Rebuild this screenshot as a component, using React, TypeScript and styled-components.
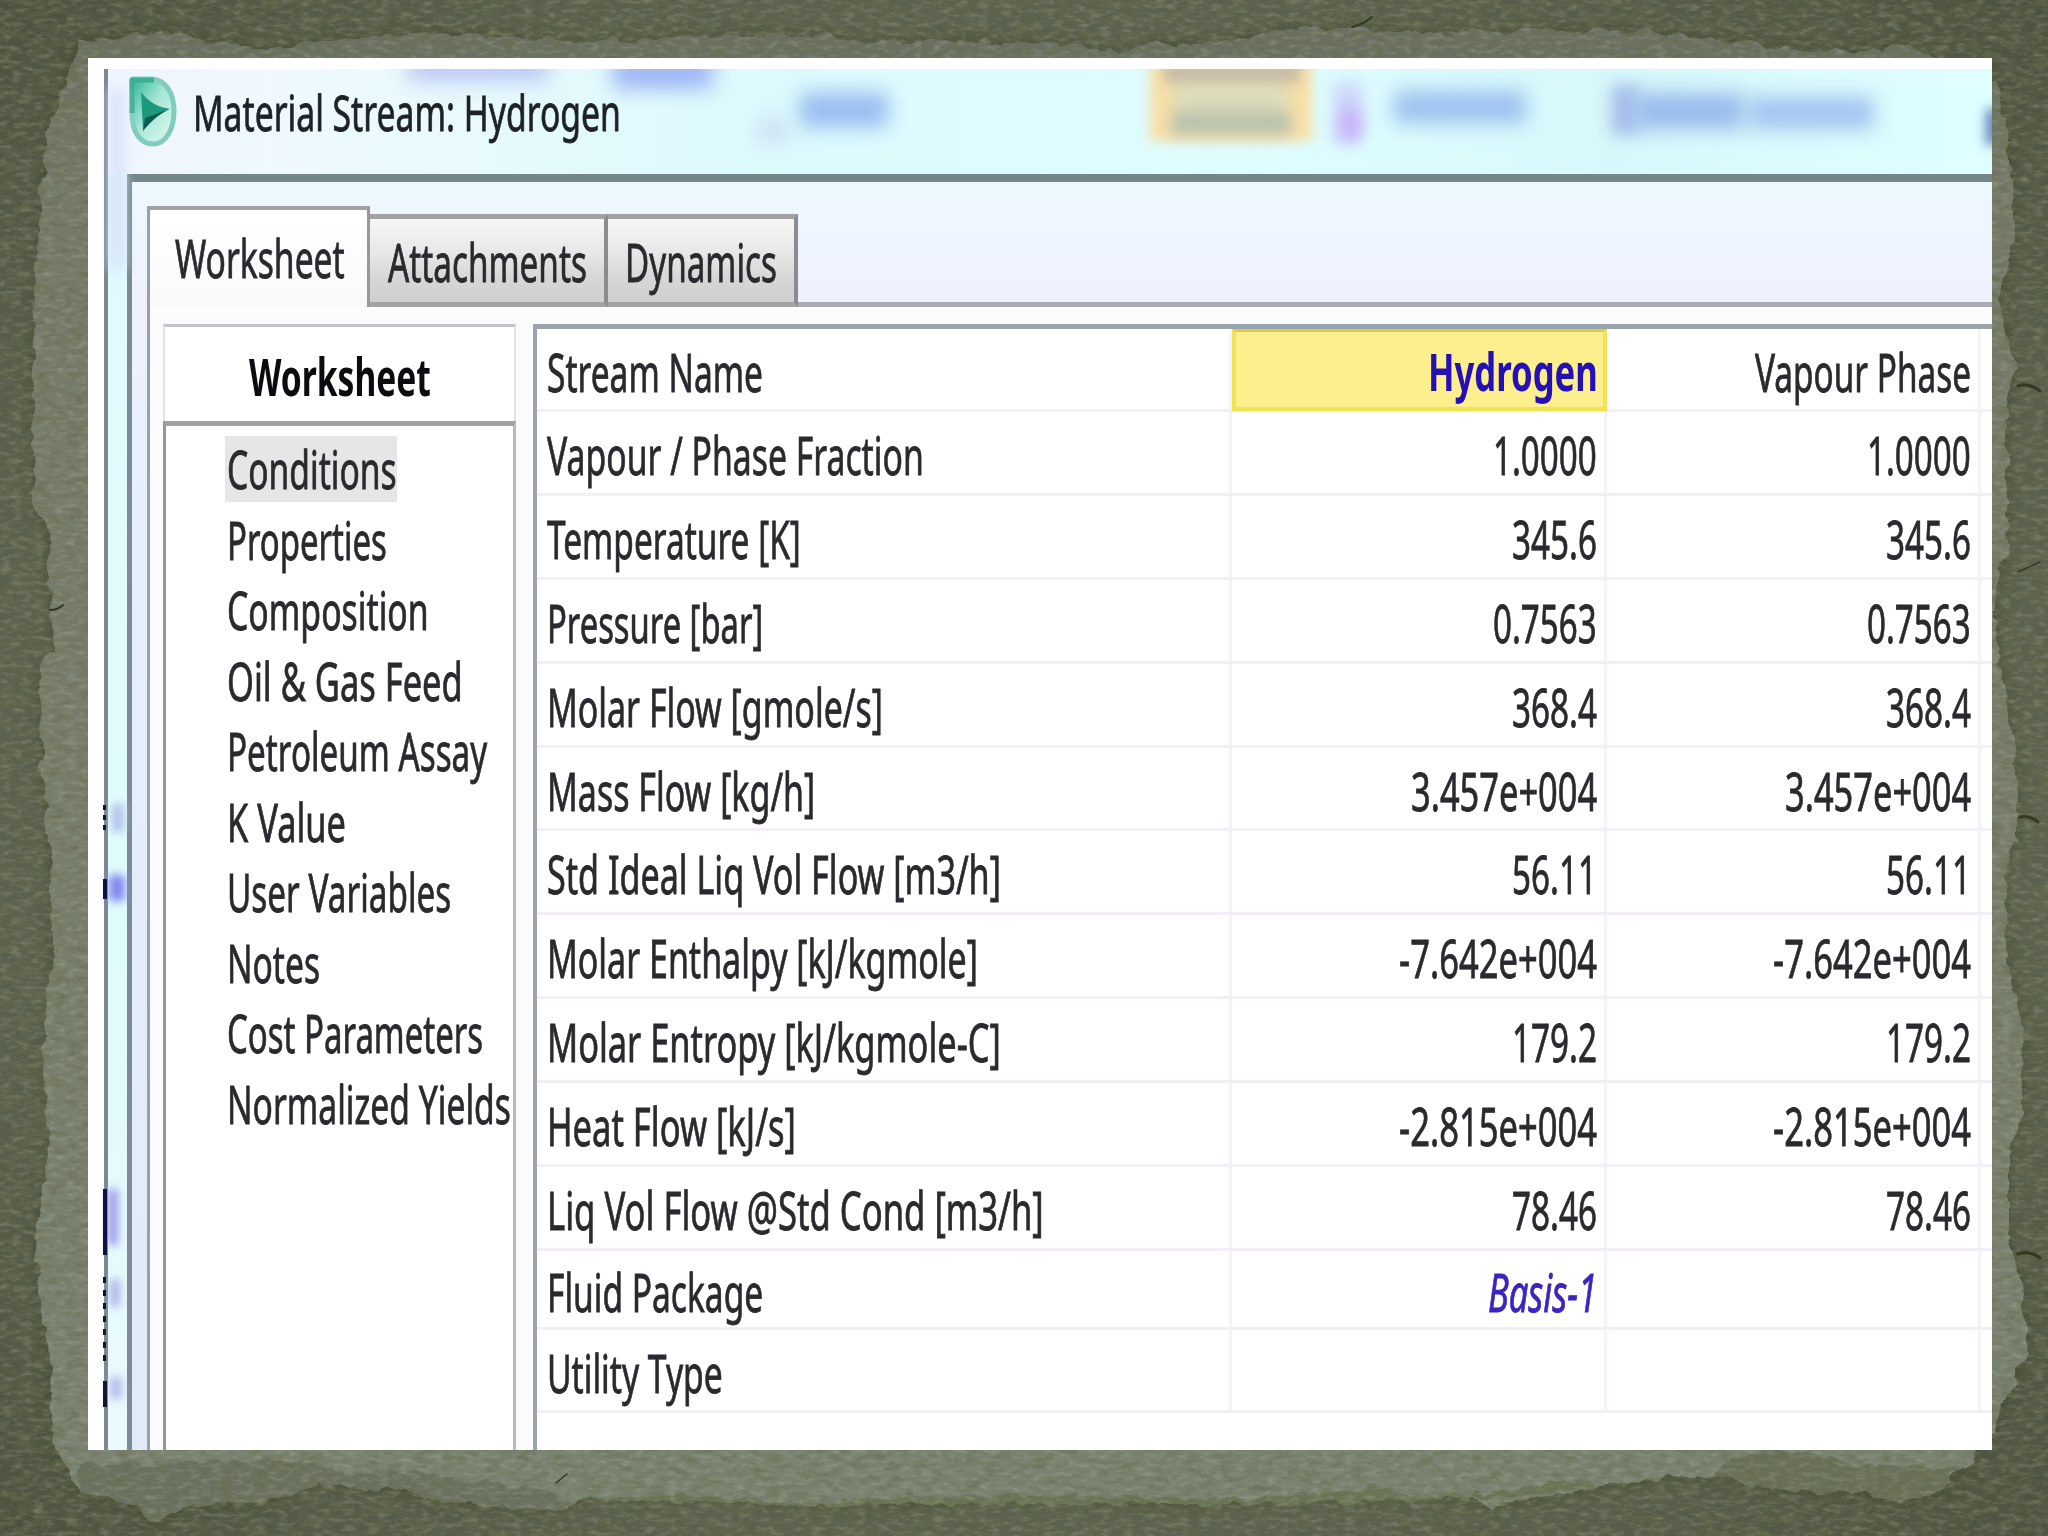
import React, { useLayoutEffect, useRef, useState } from "react";
import styled, { createGlobalStyle, css } from "styled-components";

const Global = createGlobalStyle`
  html, body { margin: 0; padding: 0; }
  body { background: #565d45; overflow: hidden; }
  * { box-sizing: border-box; }
`;

const Slide = styled.main`
  position: relative;
  display: flex;
  width: 2048px;
  height: 1536px;
  padding: 58px 56px 86px 88px;
  overflow: hidden;
  font-family: "Noto Sans", "Open Sans", "DejaVu Sans", sans-serif;
  color: #2a2a2e;
`;

const Backdrop = styled.svg`
  position: absolute;
  inset: 0;
  width: 100%;
  height: 100%;
`;

const Photo = styled.section`
  position: relative;
  flex: 1;
  display: flex;
  min-width: 0;
  padding: 11px 0 0 16px;
  background: #fff;
  overflow: hidden;
`;

const Window = styled.div`
  position: relative;
  flex: 1;
  display: flex;
  flex-direction: column;
  min-width: 0;
  border-left: 4px solid #7d8894;
  background: linear-gradient(180deg, #dcf6fb 0, #e2fcfe 30%, #e0fbfc 62%, #eafafd 100%);
`;

const TitleBar = styled.header`
  position: relative;
  display: flex;
  align-items: center;
  height: 105px;
  padding: 0 0 20px 20px;
  overflow: hidden;
  background: linear-gradient(90deg, #f0f5ff 0, #eef9fd 10%, #dcfafc 35%, #dffdff 60%, #d7f8fa 80%, #dffeff 100%);
`;

const Smudge = styled.i<{ $x: number; $y: number; $w: number; $h: number; $c: string; $b?: number }>`
  position: absolute;
  left: ${(p) => p.$x}px;
  top: ${(p) => p.$y}px;
  width: ${(p) => p.$w}px;
  height: ${(p) => p.$h}px;
  background: ${(p) => p.$c};
  filter: blur(${(p) => p.$b ?? 10}px);
`;

const AppIcon = styled.svg`
  position: relative;
  width: 50px;
  height: 74px;
`;

const Caption = styled.div`
  position: relative;
  margin: 1px 0 0 15px;
  color: #1d2226;
`;

const Client = styled.div`
  flex: 1;
  display: flex;
  flex-direction: column;
  margin-left: 19px;
  padding: 24px 0 0 15px;
  border-top: 8px solid #74868a;
  border-left: 5px solid #7b8c96;
  background: linear-gradient(180deg, #edf8ff 0, #eff1fc 120px, #e6f0fb 300px, #e1eaf7 100%);
`;

const Tabs = styled.nav`
  display: flex;
  align-items: flex-end;
  height: 101px;
`;

const Tab = styled.div<{ $w: number; $active?: boolean }>`
  display: flex;
  justify-content: center;
  align-items: center;
  width: ${(p) => p.$w}px;
  ${(p) =>
    p.$active
      ? css`
          height: 101px;
          padding: 0 0 2px 3px;
          border-top: 4px solid #a0a0a5;
          border-left: 3px solid #98a0a8;
          border-right: 3px solid #98989c;
          background: linear-gradient(180deg, #fff, #f9f8fb);
        `
      : css`
          height: 93px;
          padding-top: 2px;
          border-top: 5px solid #a2a2a5;
          border-right: 4px solid #8c8c90;
          border-bottom: 5px solid #a3a3a5;
          background: linear-gradient(180deg, #f6f6f6 0, #e9e8e9 40%, #d8d7d8 70%, #d0cfd0 100%);
        `}
`;

const TabRail = styled.div`
  flex: 1;
  height: 93px;
  border-bottom: 5px solid #aaa9b0;
`;

const Page = styled.div`
  flex: 1;
  display: flex;
  gap: 17px;
  padding: 17px 0 0 13px;
  border-left: 3px solid #98a0a8;
  background: #fbfafd;
`;

const Sidebar = styled.aside`
  display: flex;
  flex-direction: column;
  width: 353px;
  background: #fff;
`;

const SidebarTitle = styled.h2`
  display: flex;
  justify-content: center;
  align-items: center;
  height: 97px;
  margin: 0;
  padding: 3px 0 0 0;
  border: 2px solid #e3e2e6;
  border-top: 3px solid #c4c4c8;
  border-bottom: 0;
  color: #0c0c10;
`;

const SidebarList = styled.ul`
  flex: 1;
  margin: 0;
  padding: 8px 0 0 59px;
  list-style: none;
  border-top: 5px solid #a2a2a6;
  border-left: 3px solid #96969c;
  border-right: 3px solid #b9b9bd;
`;

const SidebarItem = styled.li`
  display: flex;
  align-items: center;
  height: 70.5px;
`;

const ItemBox = styled.div<{ $selected?: boolean }>`
  display: flex;
  align-items: center;
  height: 66px;
  padding-left: 2px;
  background: ${(p) => (p.$selected ? "#e6e6e7" : "transparent")};
`;

const Table = styled.div`
  flex: 1;
  min-width: 0;
  border-top: 5px solid #9aa4ac;
  border-left: 4px solid #9ca4ae;
  background: #fff;
`;

const Row = styled.div<{ $h: number }>`
  display: grid;
  grid-template-columns: 695px 375px 374px 1fr;
  height: ${(p) => p.$h}px;
  border-bottom: 3px solid #f2f0f4;
`;

const Cell = styled.div<{ $tone?: "name" | "basis" }>`
  display: flex;
  align-items: center;
  justify-content: flex-end;
  padding: 5px 7px 0 0;
  border-right: 3px solid #f5f3f7;
  ${(p) =>
    p.$tone === "name" &&
    css`
      margin-bottom: -2px;
      padding: 3px 5px 0 0;
      border: 4px solid #f2e352;
      border-top: 3px solid #d9cc4c;
      background: #fdee8e;
      color: #2510b8;
    `}
  ${(p) => p.$tone === "basis" && css`color: #3b25c0;`}
`;

const LabelCell = styled(Cell)`
  justify-content: flex-start;
  padding: 5px 0 0 10px;
`;

const Clip = styled.div<{ $w: number }>`
  width: ${(p) => p.$w}px;
  white-space: nowrap;
`;

const Glyphs = styled.span<{ $size: number; $bold?: boolean; $italic?: boolean }>`
  display: inline-block;
  vertical-align: top;
  transform-origin: 0 50%;
  font-size: ${(p) => p.$size}px;
  line-height: 64px;
  font-weight: ${(p) => (p.$bold ? 700 : 400)};
  font-style: ${(p) => (p.$italic ? "italic" : "normal")};
  -webkit-text-stroke: ${(p) => (p.$bold ? 0 : 0.8)}px currentColor;
`;

type CondensedProps = { text: string; width: number; size?: number; bold?: boolean; italic?: boolean };

/* Squeezes a line of text horizontally into the given width. */
function Condensed({ text, width, size = 52, bold, italic }: CondensedProps) {
  const ref = useRef<HTMLSpanElement>(null);
  const [scale, setScale] = useState(0.65);
  useLayoutEffect(() => {
    if (ref.current) setScale(width / ref.current.offsetWidth);
  }, [text, width, size]);
  return (
    <Clip $w={width}>
      <Glyphs ref={ref} $size={size} $bold={bold} $italic={italic} style={{ transform: `scaleX(${scale})` }}>
        {text}
      </Glyphs>
    </Clip>
  );
}

const items: [string, number][] = [
  ["Conditions", 170],
  ["Properties", 160],
  ["Composition", 202],
  ["Oil & Gas Feed", 236],
  ["Petroleum Assay", 260],
  ["K Value", 119],
  ["User Variables", 224],
  ["Notes", 93],
  ["Cost Parameters", 256],
  ["Normalized Yields", 284],
];

type RowData = { label: string; lw: number; value: string; vw: number; h: number };

const rows: RowData[] = [
  { label: "Vapour / Phase Fraction", lw: 377, value: "1.0000", vw: 104, h: 84 },
  { label: "Temperature [K]", lw: 254, value: "345.6", vw: 85, h: 84 },
  { label: "Pressure [bar]", lw: 216, value: "0.7563", vw: 104, h: 84 },
  { label: "Molar Flow [gmole/s]", lw: 336, value: "368.4", vw: 85, h: 84 },
  { label: "Mass Flow [kg/h]", lw: 268, value: "3.457e+004", vw: 186, h: 83 },
  { label: "Std Ideal Liq Vol Flow [m3/h]", lw: 454, value: "56.11", vw: 85, h: 84 },
  { label: "Molar Enthalpy [kJ/kgmole]", lw: 431, value: "-7.642e+004", vw: 198, h: 84 },
  { label: "Molar Entropy [kJ/kgmole-C]", lw: 454, value: "179.2", vw: 85, h: 84 },
  { label: "Heat Flow [kJ/s]", lw: 249, value: "-2.815e+004", vw: 198, h: 84 },
  { label: "Liq Vol Flow @Std Cond [m3/h]", lw: 497, value: "78.46", vw: 85, h: 84 },
];

function TornPaper() {
  return (
    <Backdrop viewBox="0 0 2048 1536">
      <defs>
        <filter id="ground" x="0" y="0" width="100%" height="100%">
          <feTurbulence type="fractalNoise" baseFrequency="0.06 0.13" numOctaves="4" seed="7" />
          <feColorMatrix values="0 0 0 0 0.14  0 0 0 0 0.15  0 0 0 0 0.08  2.6 0 0 0 -1.1" />
        </filter>
        <filter id="grain" x="0" y="0" width="100%" height="100%">
          <feTurbulence type="fractalNoise" baseFrequency="0.09 0.22" numOctaves="3" seed="21" />
          <feColorMatrix values="0 0 0 0 0.62  0 0 0 0 0.65  0 0 0 0 0.54  0 2.4 0 0 -1.1" />
        </filter>
        <filter id="sheet" x="-3%" y="-3%" width="106%" height="106%">
          <feTurbulence type="fractalNoise" baseFrequency="0.05" numOctaves="3" seed="3" result="n" />
          <feDisplacementMap in="SourceGraphic" in2="n" scale="14" xChannelSelector="R" yChannelSelector="G" />
        </filter>
        <filter id="soft" x="-5%" y="-5%" width="110%" height="110%">
          <feGaussianBlur stdDeviation="7" />
        </filter>
        <radialGradient id="vig" cx="50%" cy="50%" r="72%">
          <stop offset="0.7" stopColor="#454a38" stopOpacity="0" />
          <stop offset="1" stopColor="#3f4530" stopOpacity="0.6" />
        </radialGradient>
        <linearGradient id="paper" x1="0" y1="0" x2="0" y2="1">
          <stop offset="0" stopColor="#696f5e" />
          <stop offset="0.1" stopColor="#747968" />
          <stop offset="1" stopColor="#7a8370" />
        </linearGradient>
        <path
          id="edge"
          d="M78 40L125 38L170 33L214 42L268 50L312 43L357 38L424 32L513 37L580 42L700 37L792 33L858 42L948 40L1082 45L1117 55L1153 43L1216 43L1278 30L1348 30L1482 33L1616 30L1727 40L1794 50L1839 52L1906 45L1933 57L1995 78L2007 127L2013 230L2008 274L1997 299L2010 333L2015 372L2007 411L2007 549L1995 588L1997 647L2010 725L2017 784L2017 842L2003 877L2010 970L2023 1029L2022 1117L2008 1146L2008 1234L2022 1283L2028 1352L2015 1381L1992 1430L1972 1460L1946 1487L1900 1503L1868 1495L1763 1488L1711 1475L1633 1482L1594 1488L1489 1506L1476 1499L1358 1495L1228 1504L1110 1503L1006 1498L914 1504L810 1504L731 1498L653 1496L575 1500L562 1509L444 1502L398 1492L320 1483L268 1502L183 1506L157 1522L131 1505L78 1490L52 1440L46 1342L34 1244L49 1156L44 1068L51 960L51 882L41 754L40 666L52 647L50 607L48 534L34 500L32 392L36 294L42 167L60 93Z"
        />
      </defs>
      <rect width="2048" height="1536" fill="#5a614c" />
      <rect width="2048" height="1536" fill="url(#vig)" />
      <use href="#edge" fill="#3c4527" opacity="0.65" filter="url(#soft)" />
      <g filter="url(#sheet)">
        <use href="#edge" fill="url(#paper)" />
        <path
          d="M78 1465L190 1462L300 1460L345 1474L420 1472L520 1488L570 1500L562 1509L444 1502L398 1492L320 1483L268 1502L183 1506L157 1522L131 1505L78 1490Z"
          fill="#6b725e"
        />
        <path
          d="M1711 1475L1745 1454L1800 1452L1850 1462L1900 1466L1960 1470L1946 1487L1900 1503L1868 1495L1763 1488Z"
          fill="#676f58"
        />
        <path
          d="M575 1500L653 1494L731 1498L790 1502L1006 1495L1250 1499L1358 1491L1476 1496L1540 1482L1594 1480L1594 1488L1476 1499L1228 1504L810 1504Z"
          fill="#6b7457"
        />
      </g>
      <rect width="2048" height="1536" filter="url(#ground)" opacity="0.6" />
      <rect width="2048" height="1536" filter="url(#grain)" opacity="0.22" />
      <g stroke="#33381f" strokeWidth="3" fill="none" strokeLinecap="round">
        <path d="M50 610Q58 610 63 605" strokeWidth="2" />
        <path d="M1352 27Q1364 24 1372 17" strokeWidth="2" />
        <path d="M2018 386Q2028 382 2040 391" />
        <path d="M2020 817Q2030 815 2038 822" />
        <path d="M2018 1254Q2030 1250 2040 1258" />
        <path d="M2018 572L2040 562" strokeWidth="1.5" />
        <path d="M556 1483L567 1474" strokeWidth="1.5" />
      </g>
    </Backdrop>
  );
}

function StreamIcon() {
  return (
    <AppIcon viewBox="0 0 50 74">
      <defs>
        <linearGradient id="leaf" x1="0" y1="0" x2="1" y2="1">
          <stop offset="0" stopColor="#2fb595" />
          <stop offset="0.45" stopColor="#a5e6d6" />
          <stop offset="1" stopColor="#e6fbf7" />
        </linearGradient>
      </defs>
      <path
        d="M4 5Q4 4 6 4H24C39 5 46 20 46 36C46 54 38 69 25 69C12 69 4 56 4 40Z"
        fill="url(#leaf)"
        stroke="#80cdbd"
        strokeWidth="5"
        strokeLinejoin="round"
      />
      <path d="M4 38V5H26" fill="none" stroke="#3dae94" strokeWidth="5" strokeLinejoin="round" />
      <path d="M13 17C20 27 30 32 42 34C30 38 20 46 15 56Z" fill="#1d9a7e" />
      <path d="M15 56L17 43L42 34C31 39 22 47 15 56Z" fill="#0d5a50" />
    </AppIcon>
  );
}

export default function App() {
  return (
    <>
      <Global />
      <Slide>
        <TornPaper />
        <Photo>
          <Window>
            <TitleBar>
              <Smudge $x={300} $y={-14} $w={140} $h={26} $c="#b9c6f5" />
              <Smudge $x={505} $y={-14} $w={100} $h={34} $c="#9fb6f4" />
              <Smudge $x={692} $y={24} $w={88} $h={34} $c="#98bcf0" />
              <Smudge $x={650} $y={50} $w={30} $h={22} $c="#cdddf5" />
              <Smudge $x={1042} $y={-8} $w={162} $h={80} $c="#f8dfa6" $b={6} />
              <Smudge $x={1066} $y={10} $w={114} $h={50} $c="#dcdcbc" $b={8} />
              <Smudge $x={1056} $y={-8} $w={136} $h={22} $c="#c6bda6" $b={6} />
              <Smudge $x={1064} $y={42} $w={118} $h={24} $c="#bcc3ac" $b={7} />
              <Smudge $x={1226} $y={14} $w={28} $h={60} $c="#ccd4fb" $b={8} />
              <Smudge $x={1232} $y={40} $w={20} $h={30} $c="#c9b4fa" $b={7} />
              <Smudge $x={1286} $y={22} $w={132} $h={32} $c="#9cc0ee" />
              <Smudge $x={1503} $y={16} $w={28} $h={50} $c="#a8bfea" $b={8} />
              <Smudge $x={1525} $y={24} $w={112} $h={36} $c="#9abbec" />
              <Smudge $x={1640} $y={28} $w={126} $h={32} $c="#a3c3f0" />
              <Smudge $x={1878} $y={40} $w={14} $h={36} $c="#5f7fb8" $b={6} />
              <StreamIcon />
              <Caption>
                <Condensed text="Material Stream: Hydrogen" width={428} size={50} />
              </Caption>
            </TitleBar>
            <Smudge $x={2} $y={20} $w={14} $h={180} $c="#d9e3fb" $b={6} />
            <Smudge $x={4} $y={735} $w={12} $h={28} $c="#b4c0ea" $b={4} />
            <Smudge $x={1} $y={806} $w={16} $h={26} $c="#8386f0" $b={4} />
            <Smudge $x={0} $y={1120} $w={10} $h={56} $c="#9b98ea" $b={4} />
            <Smudge $x={2} $y={1210} $w={10} $h={28} $c="#aab4e4" $b={4} />
            <Smudge $x={2} $y={1308} $w={12} $h={22} $c="#b4bdea" $b={4} />
            <Smudge $x={-5} $y={810} $w={4} $h={20} $c="#101048" $b={0} />
            <Smudge $x={-5} $y={1120} $w={4} $h={66} $c="#101048" $b={0} />
            <Smudge $x={-5} $y={1312} $w={4} $h={26} $c="#15152c" $b={0} />
            <Smudge
              $x={-5}
              $y={1208}
              $w={3}
              $h={90}
              $c="repeating-linear-gradient(180deg, #15152c 0 6px, transparent 6px 13px)"
              $b={0}
            />
            <Smudge
              $x={-5}
              $y={736}
              $w={3}
              $h={30}
              $c="repeating-linear-gradient(180deg, #15152c 0 5px, transparent 5px 10px)"
              $b={0}
            />
            <Client>
              <Tabs>
                <Tab $w={223} $active>
                  <Condensed text="Worksheet" width={170} />
                </Tab>
                <Tab $w={238}>
                  <Condensed text="Attachments" width={199} />
                </Tab>
                <Tab $w={190}>
                  <Condensed text="Dynamics" width={152} />
                </Tab>
                <TabRail />
              </Tabs>
              <Page>
                <Sidebar>
                  <SidebarTitle>
                    <Condensed text="Worksheet" width={182} bold />
                  </SidebarTitle>
                  <SidebarList>
                    {items.map(([text, width], i) => (
                      <SidebarItem key={text}>
                        <ItemBox $selected={i === 0}>
                          <Condensed text={text} width={width} />
                        </ItemBox>
                      </SidebarItem>
                    ))}
                  </SidebarList>
                </Sidebar>
                <Table>
                  <Row $h={83}>
                    <LabelCell>
                      <Condensed text="Stream Name" width={216} />
                    </LabelCell>
                    <Cell $tone="name">
                      <Condensed text="Hydrogen" width={170} bold />
                    </Cell>
                    <Cell>
                      <Condensed text="Vapour Phase" width={216} />
                    </Cell>
                    <span />
                  </Row>
                  {rows.map((r) => (
                    <Row key={r.label} $h={r.h}>
                      <LabelCell>
                        <Condensed text={r.label} width={r.lw} />
                      </LabelCell>
                      <Cell>
                        <Condensed text={r.value} width={r.vw} />
                      </Cell>
                      <Cell>
                        <Condensed text={r.value} width={r.vw} />
                      </Cell>
                    </Row>
                  ))}
                  <Row $h={79}>
                    <LabelCell>
                      <Condensed text="Fluid Package" width={216} />
                    </LabelCell>
                    <Cell $tone="basis">
                      <Condensed text="Basis-1" width={109} italic />
                    </Cell>
                    <Cell />
                  </Row>
                  <Row $h={83}>
                    <LabelCell>
                      <Condensed text="Utility Type" width={176} />
                    </LabelCell>
                    <Cell />
                    <Cell />
                  </Row>
                </Table>
              </Page>
            </Client>
          </Window>
        </Photo>
      </Slide>
    </>
  );
}
